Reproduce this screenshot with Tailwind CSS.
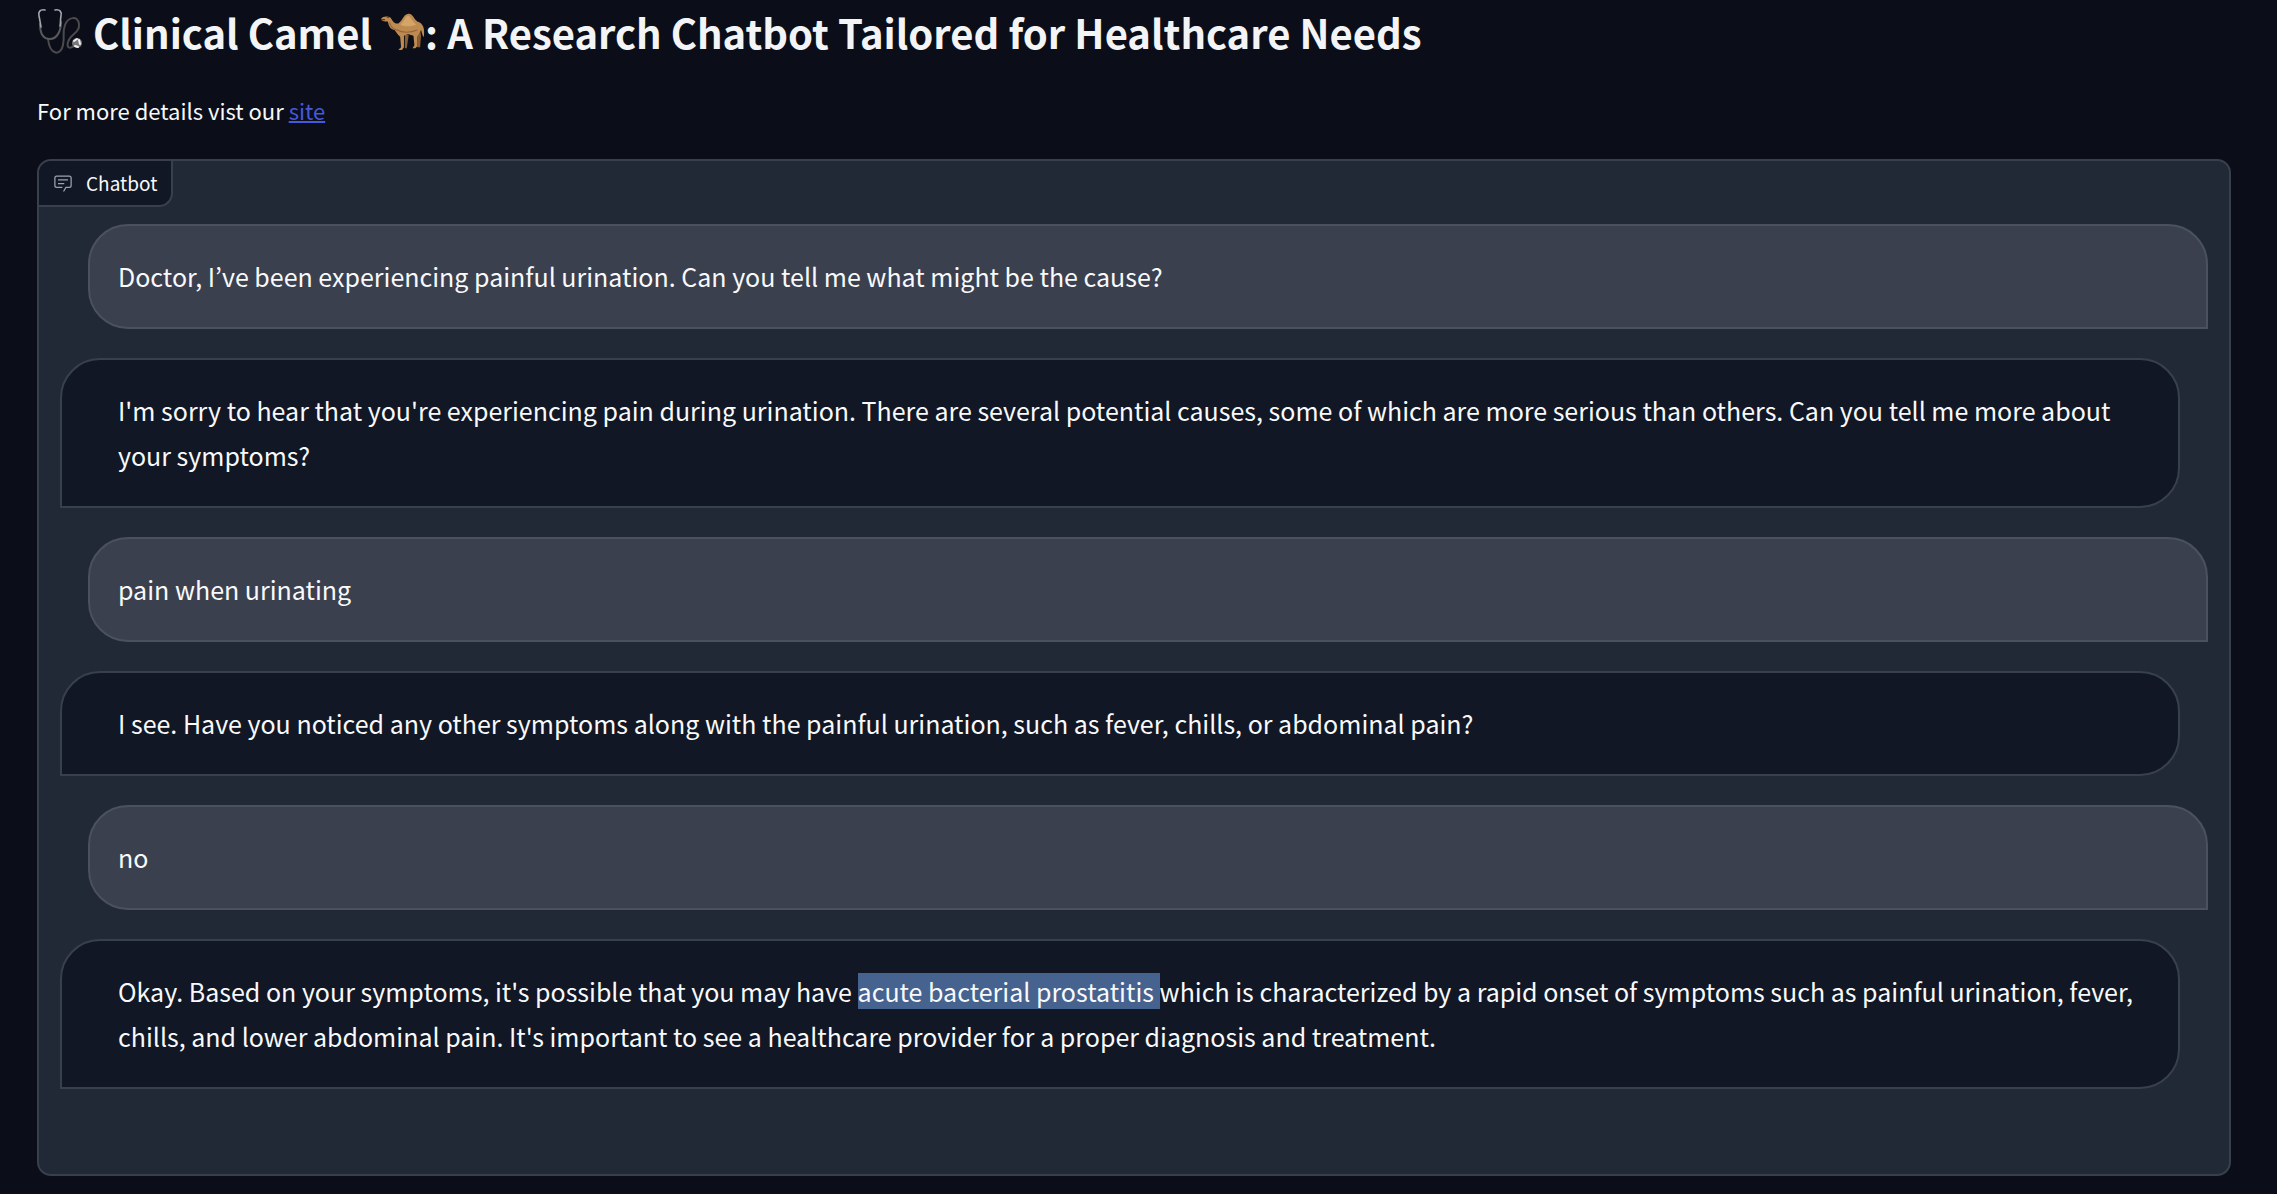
<!DOCTYPE html>
<html lang="en">
	<head>
		<meta charset="UTF-8" />
		<meta name="viewport" content="width=device-width, initial-scale=1.0" />
		<title>Clinical Camel</title>
		<script src="https://cdn.jsdelivr.net/npm/@tailwindcss/browser@4"></script>
	</head>
	<body
		class="bg-[#0b0e18] text-[#f8f9fb] min-h-screen pl-[37px] pr-[46px] pb-[18px] font-['Noto_Sans_CJK_KR',sans-serif]"
	>
		<h1 class="flex items-center h-16 text-[40px] font-bold text-[#f3f4f6] whitespace-pre">
			<!-- stethoscope -->
			<svg class="w-[46px] h-[48px] mr-[10px]" viewBox="0 0 46 48" fill="none" stroke-linecap="round" role="img" aria-label="stethoscope">
				<path d="M11 31C13 48 24 48 26 37C28 27 25 25 28 17C31 9 41 7 42 16C43 25 33 26 31 34C29 41 34 41 38 37" stroke="#4b4a4c" stroke-width="2" />
				<path d="M3 16C3 25 6 31 13 31C20 31 24 23 24 14" stroke="#59595c" stroke-width="2" />
				<path d="M8 2C3 1 1 4 2 8C3 12 3 14 4 19M18 2C23 1 25 4 24 8C23 12 24 14 23 18" stroke="#a3a6aa" stroke-width="1.6" />
				<circle cx="40" cy="35" r="5" fill="#77787a" />
				<path d="M37 33l3-2M42 32l1 4M38 38l3 1" stroke="#f0f0f0" stroke-width="2" />
			</svg>
			<span>Clinical Camel </span>
			<!-- camel -->
			<svg class="w-11 h-[38px]" viewBox="0 0 46 40" role="img" aria-label="camel">
				<path d="M35 16L41 17L42 24L41 36H38L38 25Z" fill="#8a5e34" />
				<path d="M25 22L29 23L27 37H25Z" fill="#8a5e34" />
				<path d="M0 6C2 3 7 3 10 5C12 8 14 12 18 11C22 9 23 2 28 1C33 0 34 6 38 9C44 11 46 15 45 25C44 26 43 21 42 18L38 25L38 35L36 37H33L35 34L34 24L28 22L24 24L24 36L22 39H18L21 36L20 25C17 23 16 20 14 18C9 17 8 13 7 9C3 9 0 8 0 6Z" fill="#bd8a51" />
				<path d="M20 12C24 10 25 4 28 3C31 3 32 9 37 12C34 14 24 15 20 12Z" fill="#d5a467" />
				<path d="M9 10C10 15 13 17 17 18C22 21 31 21 38 18" fill="none" stroke="#956536" stroke-width="1.2" />
				<path d="M0 7L4 7M6 4L8 5" stroke="#5c3c22" stroke-width="1.2" />
			</svg>
			<span>: A Research Chatbot Tailored for Healthcare Needs</span>
		</h1>

		<p class="mt-[30px] text-[22px] leading-[32px]">
			For more details vist our
			<a href="#" class="text-[#4459dc] underline decoration-2">site</a>
		</p>

		<div class="mt-[33px] bg-[#222936] border-2 border-[#39404d] rounded-[14px]">
			<div class="inline-flex items-center h-[46px] pl-[14px] pr-[14px] gap-[13px] bg-[#111724] border-r-2 border-b-2 border-[#39404d] rounded-tl-xl rounded-br-[14px] align-top">
				<svg class="w-5 h-5" viewBox="0 0 32 32" fill="#9ca3af" aria-hidden="true">
					<path d="M17.74 30L16 29l4-7h6a2 2 0 0 0 2-2V8a2 2 0 0 0-2-2H6a2 2 0 0 0-2 2v12a2 2 0 0 0 2 2h9v2H6a4 4 0 0 1-4-4V8a4 4 0 0 1 4-4h20a4 4 0 0 1 4 4v12a4 4 0 0 1-4 4h-4.84Z" />
					<path d="M8 10h16v2H8zm0 6h10v2H8z" />
				</svg>
				<span class="text-[19px] leading-7">Chatbot</span>
			</div>

			<!-- messages -->
			<div class="flex flex-col gap-[29px] mt-[17px] pl-[21px] pr-[21px] pb-[85px] text-[25px] leading-[45px]">
				<div class="ml-7 py-7 pl-7 pr-14 bg-[#3b404f] border-2 border-[#4b515f] rounded-[40px] rounded-br-none">
					Doctor, I’ve been experiencing painful urination. Can you tell me what might be the cause?
				</div>
				<div class="mr-7 py-7 pl-14 pr-7 bg-[#111724] border-2 border-[#39404d] rounded-[40px] rounded-bl-none">
					I'm sorry to hear that you're experiencing pain during urination. There are several potential causes, some of which are more serious than others. Can you tell me more about your symptoms?
				</div>
				<div class="ml-7 py-7 pl-7 pr-14 bg-[#3b404f] border-2 border-[#4b515f] rounded-[40px] rounded-br-none">
					pain when urinating
				</div>
				<div class="mr-7 py-7 pl-14 pr-7 bg-[#111724] border-2 border-[#39404d] rounded-[40px] rounded-bl-none">
					I see. Have you noticed any other symptoms along with the painful urination, such as fever, chills, or abdominal pain?
				</div>
				<div class="ml-7 py-7 pl-7 pr-14 bg-[#3b404f] border-2 border-[#4b515f] rounded-[40px] rounded-br-none">
					no
				</div>
				<div class="mr-7 py-7 pl-14 pr-7 bg-[#111724] border-2 border-[#39404d] rounded-[40px] rounded-bl-none">
					Okay. Based on your symptoms, it's possible that you may have <mark class="bg-[#46628f] text-inherit">acute bacterial prostatitis </mark>which is characterized by a rapid onset of symptoms such as painful urination, fever, chills, and lower abdominal pain. It's important to see a healthcare provider for a proper diagnosis and treatment.
				</div>
			</div>
		</div>
	</body>
</html>
